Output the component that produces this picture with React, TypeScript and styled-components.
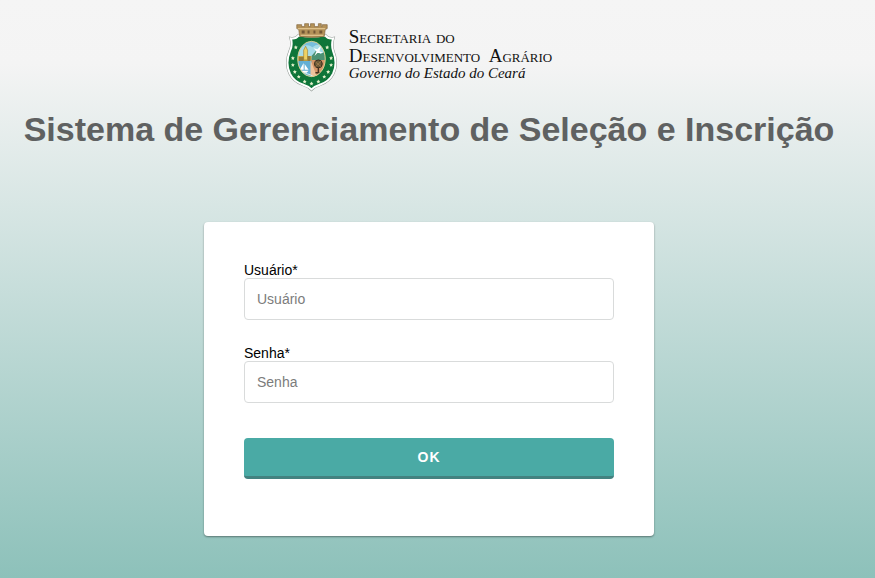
import React from "react";
import styled, { createGlobalStyle } from "styled-components";

const GlobalStyle = createGlobalStyle`
  * { box-sizing: border-box; }
  html { background: #8dc1ba; }
  body {
    margin: 0;
    font-family: "Liberation Sans", Arial, sans-serif;
    font-size: 14px;
    line-height: 16px;
    color: #000;
  }
`;

const Page = styled.div`
  min-height: 100vh;
  padding: 22px 17px 40px 0;
  display: flex;
  flex-direction: column;
  align-items: center;
  background: linear-gradient(to bottom, #f5f5f5 0%, #f4f4f4 11%, #8dc1ba 100%);
`;

const Brand = styled.header`
  display: flex;
  align-items: flex-start;
  gap: 12px;
  padding-right: 20px;
`;

const Crest = styled.svg`
  display: block;
  flex: none;
`;

const BrandText = styled.div`
  padding-top: 5px;
  font-family: "Liberation Serif", "Times New Roman", serif;
  color: #111;
  white-space: pre;
`;

const BrandLine = styled.div`
  font-size: 19px;
  line-height: 19px;
  font-variant: small-caps;
`;

const BrandSub = styled.div`
  font-size: 15px;
  line-height: 16px;
  font-style: italic;
`;

const Title = styled.h1`
  margin: 16px 0 73px;
  font-size: 34px;
  line-height: 40px;
  font-weight: bold;
  color: #5f6161;
  text-align: center;
`;

const Card = styled.form`
  width: 100%;
  max-width: 450px;
  padding: 40px 40px 57px;
  background: #fff;
  border-radius: 4px;
  box-shadow: 0 1px 2px rgba(0, 0, 0, 0.4);
`;

const Field = styled.div`
  display: flex;
  flex-direction: column;
  margin-bottom: 25px;
`;

const Input = styled.input`
  width: 100%;
  height: 42px;
  padding: 0 12px;
  border: 1px solid #d9dbdb;
  border-radius: 4px;
  background: #fff;
  font: inherit;
  color: #333;
  &::placeholder { color: #7c7c7c; opacity: 1; }
`;

const Submit = styled.button`
  display: block;
  width: 100%;
  height: 41px;
  margin-top: 35px;
  padding: 0;
  border: 0;
  border-bottom: 3px solid #438280;
  border-radius: 4px;
  background: #4aaaa5;
  color: #fff;
  font-family: inherit;
  font-size: 14px;
  font-weight: bold;
  letter-spacing: 1px;
  cursor: pointer;
`;

const shield =
  "M4 15 Q9 16 12 12 Q25 14 39 12 Q42 16 47 15 Q45 22 47 28 Q52 40 47 51 Q43 59 34 62 Q28 64 25 67 Q22 64 16 62 Q7 59 3 51 Q-2 40 3 28 Q6 22 4 15Z";

const stars = [
  [9, 24], [6, 35], [6, 42], [8, 49], [12, 54], [18, 59], [25, 61],
  [32, 59], [38, 54], [42, 49], [45, 42], [45, 35], [41, 24],
];

function StateCrest() {
  return (
    <Crest width="51" height="71" viewBox="-1 -1 52 71" role="img" aria-label="Brasão do Ceará">
      <defs>
        <clipPath id="oval"><ellipse cx="25" cy="39" rx="14" ry="18" /></clipPath>
      </defs>
      <path d={shield} fill="#0e7539" stroke="#8d9590" strokeWidth="3" />
      <path d={shield} fill="#0e7539" stroke="#fff" strokeWidth="2" />
      <path d="M13 13 L12 6 L10 5 V1 H15 V3 H18 V0 H22 V3 H24 V0 H28 V3 H32 V0 H35 V3 H36 V1 H41 V5 L39 6 L38 13 Q25 15 13 13Z" fill="#b39158" stroke="#84673d" strokeWidth=".7" />
      <path d="M11 5 H39 M14 12 H37" stroke="#dec18b" strokeWidth="1.4" />
      <path d="M15 7 h3 v3 h-3z M21 7 h2 v3 h-2z M27 7 h2 v3 h-2z M33 7 h3 v3 h-3z" fill="#735735" />
      <g transform="translate(0 -3)">
        <g clipPath="url(#oval)">
          <rect x="10" y="20" width="30" height="38" fill="#78bfdd" />
          <path d="M10 30 Q19 22 26 27 Q34 21 41 30 V38 H10Z" fill="#a8dce8" />
          <path d="M25 36 L30 30 L34 34 L40 31 V43 H25Z" fill="#4c9273" />
          <path d="M10 36 H25 V41 H10Z" fill="#cba843" />
          <path d="M17 40 V30 L19 26 L21 30 V40Z" fill="#eed163" stroke="#967c32" strokeWidth=".6" />
          <path d="M12 37 H17 V41 H12Z M21 36 H24 V41 H21Z" fill="#937b3d" />
          <path d="M10 41 H25 V58 H10Z" fill="#62afd4" />
          <path d="M25 40 H40 V58 H25Z" fill="#d59769" />
          <path d="M24 40 L31 58 H24Z" fill="#edc39c" />
          <path d="M17 43 L13 50 H17Z M18 44 L22 50 H18Z M14 51 H22 L20 53 H15Z" fill="#fff" />
          <path d="M10 54 Q18 51 29 58" fill="none" stroke="#d7eef2" />
          <path d="M27 28 L31 29 L35 25 L33 31 L37 33 L31 33 L28 36 L30 31Z" fill="#fff" />
          <path d="M32 45 V54 M29 53 H35" stroke="#47331f" strokeWidth="1.5" />
          <circle cx="32" cy="44" r="4" fill="#6d5b38" stroke="#352b1c" />
          <path d="M29 42 L35 47 M29 47 L35 41" stroke="#aa8352" strokeWidth=".8" />
        </g>
        <ellipse cx="25" cy="39" rx="14" ry="18" fill="none" stroke="#d8cd8c" strokeWidth="1" />
      </g>
      {stars.map(([x, y]) => (
        <path key={`${x}-${y}`} d={`M${x} ${y - 2} l.6 1.3 1.4.2-1 1 .2 1.5-1.2-.8-1.2.8.2-1.5-1-1 1.4-.2z`} fill="#e4f2cc" />
      ))}
    </Crest>
  );
}

export default function App() {
  return (
    <>
      <GlobalStyle />
      <Page>
        <Brand>
          <StateCrest />
          <BrandText>
            <BrandLine>Secretaria do</BrandLine>
            <BrandLine>{"Desenvolvimento  Agrário"}</BrandLine>
            <BrandSub>Governo do Estado do Ceará</BrandSub>
          </BrandText>
        </Brand>
        <Title>Sistema de Gerenciamento de Seleção e Inscrição</Title>
        <Card onSubmit={(e) => e.preventDefault()}>
          <Field>
            <label htmlFor="usuario">Usuário*</label>
            <Input id="usuario" type="text" placeholder="Usuário" />
          </Field>
          <Field>
            <label htmlFor="senha">Senha*</label>
            <Input id="senha" type="password" placeholder="Senha" />
          </Field>
          <Submit type="submit">OK</Submit>
        </Card>
      </Page>
    </>
  );
}
